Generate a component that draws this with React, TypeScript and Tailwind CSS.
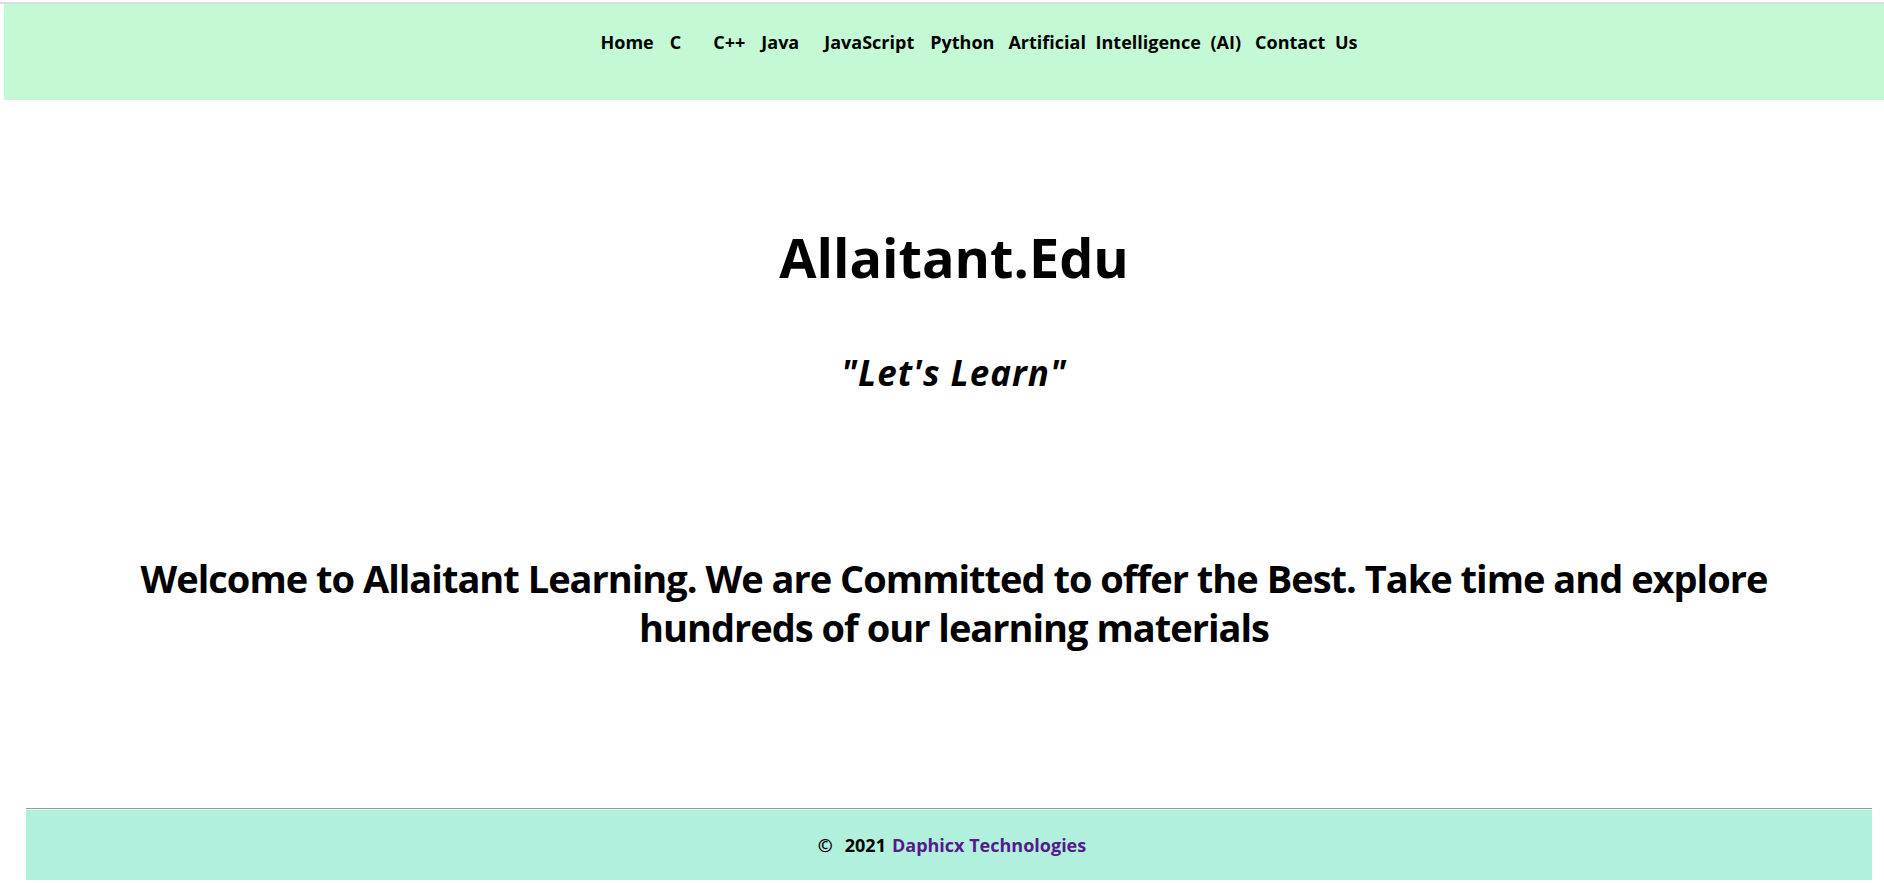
import React from "react";

export default function App() {
  return (
    <div className="min-h-[883px] bg-white text-black font-['Open_Sans',sans-serif]">
      <div className="h-[2px] bg-white" />
      <div className="h-[2px] bg-[#dedede]" />
      <nav className="ml-[4px] h-[96px] bg-[#c3f9d4] flex justify-center pl-[70px] pt-[26px]">
        <ul className="flex items-start text-[18px] font-bold leading-[24px]">
          <li><a>Home</a></li>
          <li className="ml-[16px]"><a>C</a></li>
          <li className="ml-[32px]"><a>C++</a></li>
          <li className="ml-[16px]"><a>Java</a></li>
          <li className="ml-[25px]"><a>JavaScript</a></li>
          <li className="ml-[16px]"><a>Python</a></li>
          <li className="ml-[14px] [word-spacing:5px]"><a>Artificial Intelligence (AI)</a></li>
          <li className="ml-[14px] [word-spacing:5px]"><a>Contact Us</a></li>
        </ul>
      </nav>
      <main className="pl-[24px] flex flex-col items-center text-center">
        <h1 className="mt-[130px] text-[54px] font-bold leading-none">Allaitant.Edu</h1>
        <h2 className="mt-[71px] text-[35px] font-bold italic leading-none tracking-[1px]">"Let's Learn"</h2>
        <h2 className="mt-[164px] w-[1700px] text-[38px] font-bold leading-[49px] tracking-[-1px]">
          Welcome to Allaitant Learning. We are Committed to offer the Best. Take time and explore hundreds of our learning materials
        </h2>
      </main>
      <footer className="mt-[156px] ml-[26px] w-[1846px] h-[72px] bg-[#b2f0de] border-t border-t-[#9a9a9a] flex flex-col">
        <div className="h-[1px] bg-[#e6fff6]" />
        <p className="flex-1 flex items-center justify-center pl-[6px] text-[18px] font-bold">
          <span>©</span>
          <span className="ml-[12px]">2021</span>
          <a className="ml-[6px] text-[#551a8b]">Daphicx Technologies</a>
        </p>
      </footer>
    </div>
  );
}
